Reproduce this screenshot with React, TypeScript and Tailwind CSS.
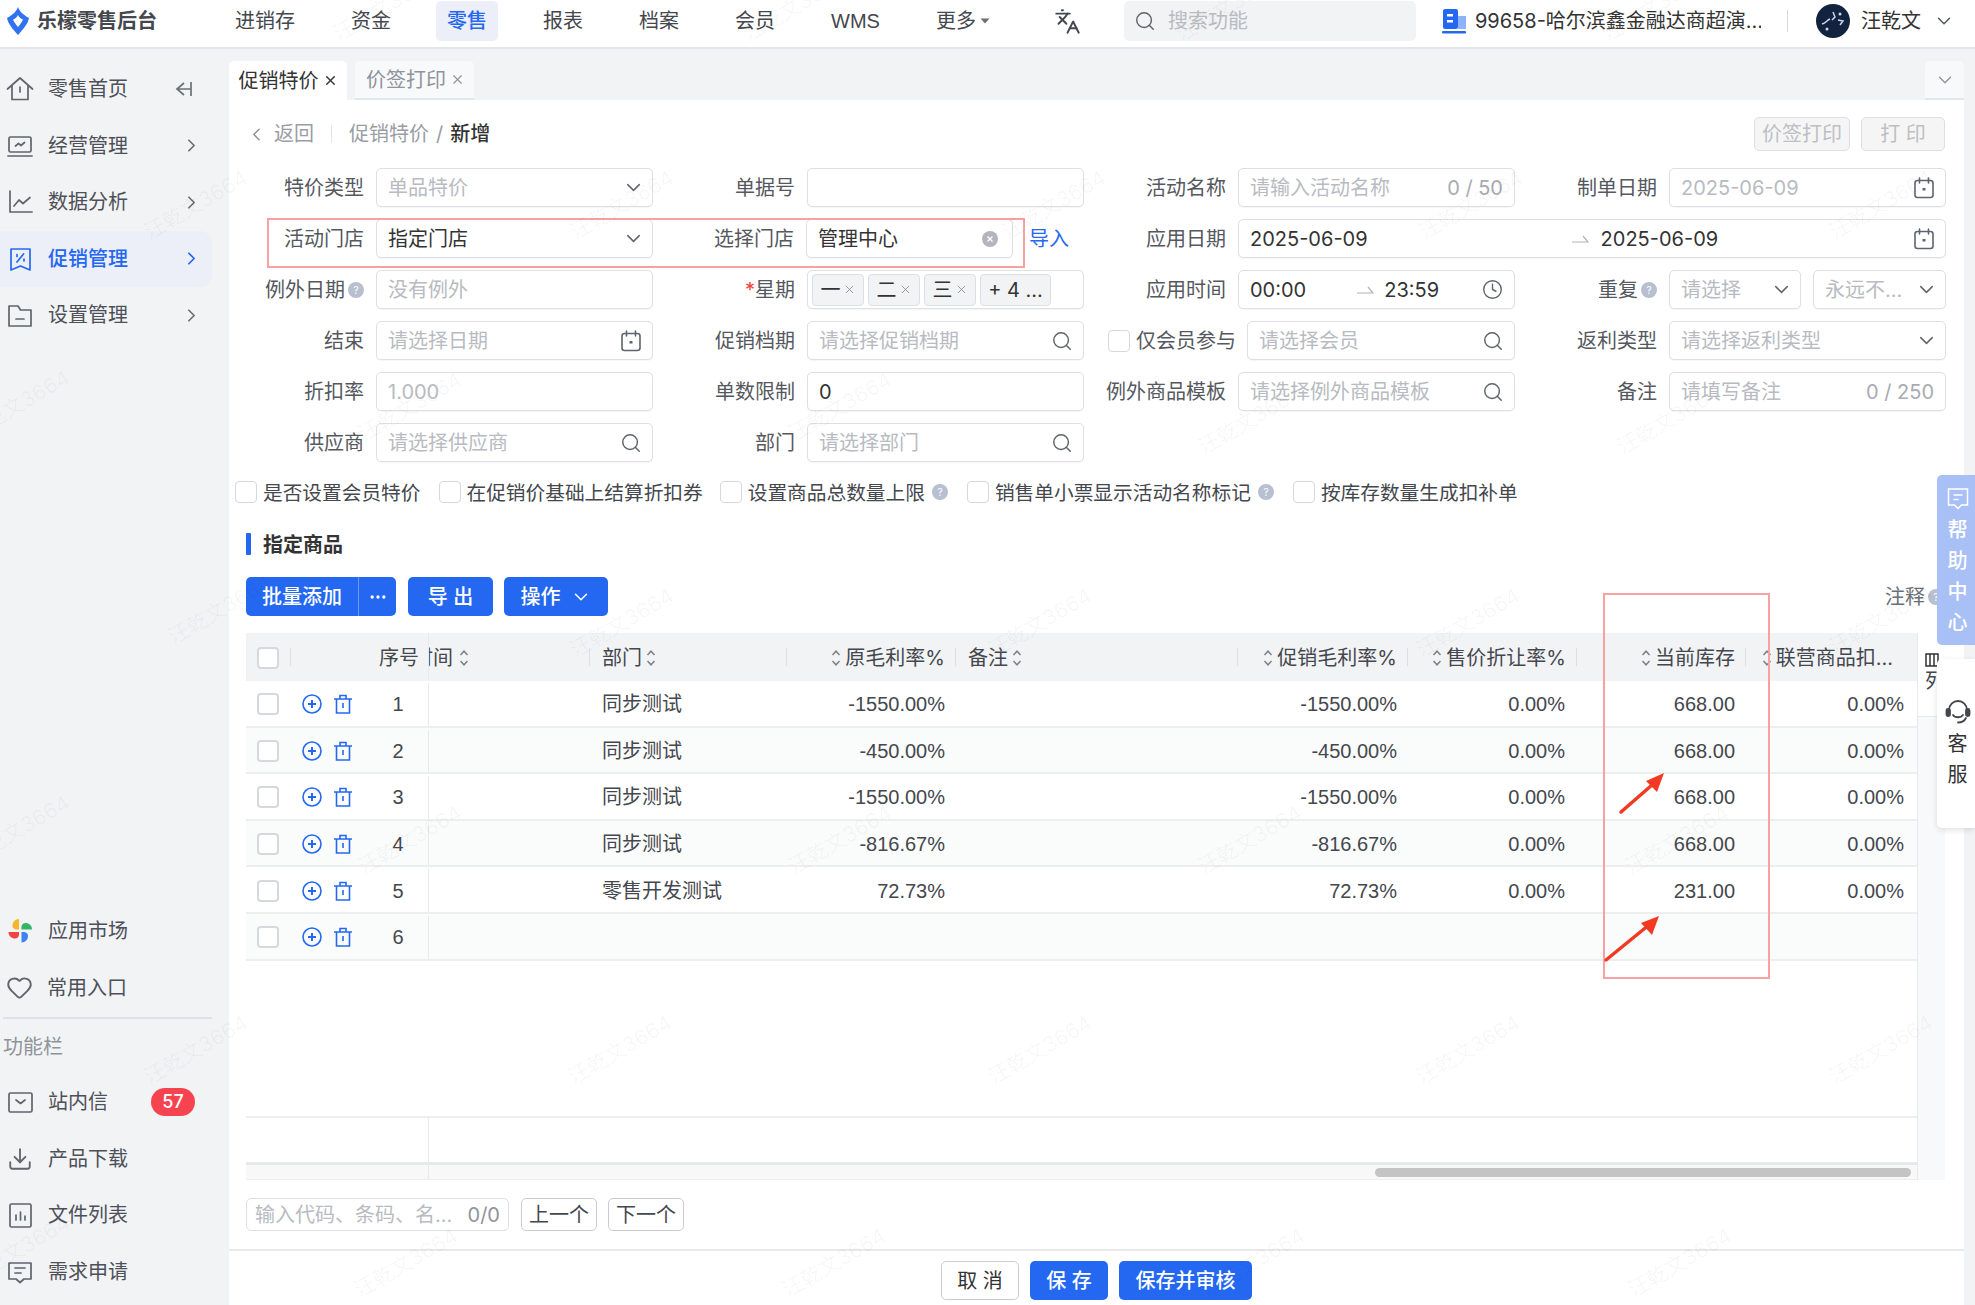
import React from "react";
import { ChevronDown, ChevronRight, ChevronLeft, Search, Clock, Languages, X, MoreHorizontal, Download, Heart } from "lucide-react";

const BLUE = "#2468f2";

function Sort() {
  return (
    <svg width="10" height="18" viewBox="0 0 10 18" fill="none" stroke="#7c8188" strokeWidth="1.500" className="shrink-0">
      <path d="M1.500 6 5 2.200 8.500 6M1.500 12 5 15.800 8.500 12" />
    </svg>
  );
}
function Help({ size = 16 }: { size?: number }) {
  return (
    <svg width={size} height={size} viewBox="0 0 16 16" className="shrink-0">
      <circle cx="8" cy="8" r="8" fill="#b7bfd0" />
      <text x="8" y="11.500" textAnchor="middle" fontSize="10" fill="#fff" fontFamily="Inter">?</text>
    </svg>
  );
}
function Box({ className = "", children }: { className?: string; children?: React.ReactNode }) {
  return <div className={"flex items-center h-[39px] rounded-[5px] border border-[#dcdfe4] bg-white px-[11px] shadow-[0_1px_1px_rgba(0,0,0,0.04)] " + className}>{children}</div>;
}
function Ph({ children }: { children: React.ReactNode }) {
  return <span className="text-[#b8bbc1] whitespace-nowrap">{children}</span>;
}
function Field({ label, help, req, children, className = "" }: { label: string; help?: boolean; req?: boolean; children: React.ReactNode; className?: string }) {
  return (
    <div className={"flex items-center justify-end " + className}>
      <div className="flex items-center text-[#55585e] whitespace-nowrap mr-3">
        {req && <span className="text-[#f04040]">*</span>}
        {label}
        {help && <span className="ml-[3px]"><Help /></span>}
      </div>
      {children}
    </div>
  );
}
const input = "w-[277px]";
const Cv = () => <ChevronDown size={23} strokeWidth={1.500} className="ml-auto -mr-[4px] text-[#5f646d] shrink-0" />;
const Sr = () => <Search size={22} strokeWidth={1.600} className="ml-auto -mr-[1px] text-[#5f646d] shrink-0" />;
function Cal() {
  return (
    <svg width="20" height="22" viewBox="0 0 20 22" fill="none" stroke="#5f646d" strokeWidth="1.600" className="ml-auto shrink-0">
      <rect x="1" y="3.500" width="18" height="17" rx="2.500" />
      <path d="M5.500 1v5M14.500 1v5" strokeLinecap="round" />
      <rect x="8.500" y="11" width="3" height="2.500" fill="#5f646d" stroke="none" />
    </svg>
  );
}
function HalfArrow({ className = "" }: { className?: string }) {
  return (
    <svg width="17" height="9" viewBox="0 0 17 9" fill="none" stroke="#b0b3b9" strokeWidth="1.200" className={"shrink-0 " + className}>
      <path d="M0 8h16L11 2" />
    </svg>
  );
}

function Tag({ t }: { t: string }) {
  return (
    <span className="flex items-center h-[32px] w-[52px] justify-center rounded-[4px] border border-[#dcdfe4] bg-[#f2f3f5] text-[#333] mr-[4px] whitespace-nowrap">
      {t}
      <X size={13} strokeWidth={1.400} className="ml-[2px] text-[#7c8188]" />
    </span>
  );
}
function Check({ className = "" }: { className?: string }) {
  return <span className={"inline-block w-[22px] h-[22px] rounded-[4px] border border-[#d5d8dd] bg-white shrink-0 " + className} />;
}

function NavIcon({ name, color }: { name: string; color: string }) {
  const p = { fill: "none", stroke: color, strokeWidth: 1.700, strokeLinecap: "round" as const, strokeLinejoin: "round" as const };
  return (
    <svg width="28" height="28" viewBox="0 0 28 28" className="shrink-0">
      {name === "home" && <g {...p}><path d="M1.500 14 14 3l12.500 11M6 11v13.500h16V11" /><path d="M14 12v5" /></g>}
      {name === "biz" && <g {...p}><rect x="3" y="5" width="22" height="15" rx="1.500" /><path d="M2 24h24M9.500 14l3-2.500 2.500 2 3.500-3" /></g>}
      {name === "chart" && <g {...p}><path d="M4 3v21h22M8 18l5-6 4 3.500 7-6" /></g>}
      {name === "promo" && <g {...p}><path d="M5 4h19v21l-9.500-4-9.500 4z" /><path d="M17.500 9 11 17" /><path d="M11 9.500v2M18 14v2" /></g>}
      {name === "folder" && <g {...p}><path d="M3 5h9l2.500 4H25v16H3z" /><path d="M10 18h8" /></g>}
      {name === "mail" && <g {...p}><rect x="3" y="5" width="23" height="19" rx="1.500" /><path d="m10 12 4.500 3.500L19 12" /></g>}
      {name === "file" && <g {...p}><rect x="4" y="3" width="21" height="23" rx="1.500" /><path d="M10 19v-5M14.500 19v-8M19 19v-4" /></g>}
      {name === "req" && <g {...p}><path d="M3 5h22v16h-7l-4 3.500-4-3.500H3z" /><path d="M9 10h10M9 15h6" /></g>}
    </svg>
  );
}
function Item({ icon, text, active, right }: { icon: React.ReactNode; text: string; active?: boolean; right?: React.ReactNode }) {
  return (
    <div className={"flex items-center h-[56.500px] w-[212px] pl-[6px] rounded-r-[12px] " + (active ? "bg-[#eceef8] text-[#2468f2] font-medium" : "text-[#4d5058]")}>
      {icon}
      <span className="ml-[14px] whitespace-nowrap">{text}</span>
      {right}
    </div>
  );
}
const Arr = ({ active }: { active?: boolean }) => <ChevronRight size={21} strokeWidth={2} className={"ml-auto mr-[10px] " + (active ? "text-[#2468f2]" : "text-[#6b7078]")} />;

const cols = "grid grid-cols-[183px_161px_197px_169px_282px_170px_169px_169px_171px]";
const rows: [string, string, string, string, string, string][] = [
  ["1", "同步测试", "-1550.00%", "-1550.00%", "668.00", "0.00%"],
  ["2", "同步测试", "-450.00%", "-450.00%", "668.00", "0.00%"],
  ["3", "同步测试", "-1550.00%", "-1550.00%", "668.00", "0.00%"],
  ["4", "同步测试", "-816.67%", "-816.67%", "668.00", "0.00%"],
  ["5", "零售开发测试", "72.73%", "72.73%", "231.00", "0.00%"],
  ["6", "", "", "", "", ""],
];

const marks: [number, number][] = [
  [385, 7], [795, 7], [1228, 7], [1654, 7],
  [196, 205], [622, 205], [1054, 205], [1471, 205], [1881, 205],
  [18, 405], [410, 407], [840, 407], [1250, 420], [1669, 420],
  [220, 610], [622, 623], [1040, 623], [1468, 623], [1881, 620],
  [18, 830], [410, 840], [840, 840], [1250, 840], [1677, 840],
  [196, 1050], [620, 1050], [1040, 1050], [1468, 1050], [1881, 1050],
  [18, 1250], [406, 1263], [834, 1263], [1253, 1263], [1680, 1263],
];

function HeadCell({ children, right, last }: { children: React.ReactNode; right?: boolean; last?: boolean }) {
  return (
    <div className={"relative flex items-center whitespace-nowrap h-full gap-[4px] pt-[1px] " + (right ? "justify-end pr-[11px]" : "pl-3")}>
      {children}
      {!last && <span className="absolute right-0 top-[15px] h-[18px] w-px bg-[#dcdfe4]" />}
    </div>
  );
}

const CkText = ({ children }: { children: React.ReactNode }) => <span className="ml-[6px] pt-[2px]">{children}</span>;

export default function App() {
  return (
    <div className="relative w-[1975px] h-[1305px] overflow-hidden bg-[#f2f3f5] text-[20px] leading-[26px] text-[#333]" style={{ fontFamily: 'Inter, "Noto Sans CJK SC", sans-serif' }}>
      {/* header */}
      <header className="flex items-center h-[49px] pb-[5px] bg-white border-b-2 border-[#e3e5e8]">
        <svg width="22" height="28" viewBox="0 0 22 28" className="ml-[7px] shrink-0">
          <path d="M11 0c1.500 4 4.500 7.500 11 11-1 5.500-5.500 11-11 17C5.500 22 1 16.500 0 11 6.500 7.500 9.500 4 11 0z" fill="#2f72f2" />
          <path d="M11 8c1 2 2.500 3.500 5 4.500-1 2.500-3 5-5 7.500-2-2.500-4-5-5-7.500 2.500-1 4-2.500 5-4.500z" fill="#fff" />
        </svg>
        <span className="ml-[8px] w-[187px] font-bold text-[#44474d] whitespace-nowrap">乐檬零售后台</span>
        <nav className="flex items-center gap-[34px]">
          {["进销存", "资金", "零售", "报表", "档案", "会员"].map((t) => (
            <span key={t} className={"flex items-center h-[40px] px-[11px] rounded-[5px] whitespace-nowrap " + (t === "零售" ? "bg-[#eceef8] text-[#2468f2] font-medium" : "text-[#44474d]")}>{t}</span>
          ))}
          <span className="flex items-center h-[40px] px-[11px] text-[#44474d] whitespace-nowrap font-['Liberation_Sans']">WMS</span>
          <span className="flex items-center h-[40px] px-[11px] text-[#44474d] whitespace-nowrap">
            更多
            <svg width="12" height="8" viewBox="0 0 12 8" className="ml-[3px]"><path d="M1.500 1.500h9L6 6.500z" fill="#6b7078" /></svg>
          </span>
        </nav>
        <Languages size={27} strokeWidth={1.700} className="ml-[52px] text-[#44474d] shrink-0" />
        <div className="flex items-center ml-[43px] w-[292px] h-[40px] rounded-[5px] bg-[#f2f3f5] pl-[10px]">
          <Search size={22} strokeWidth={1.600} className="text-[#5f646d]" />
          <span className="ml-[12px] text-[#b8bbc1]">搜索功能</span>
        </div>
        <svg width="26" height="26" viewBox="0 0 26 26" className="ml-[25px] shrink-0">
          <rect x="2" y="1" width="15" height="20" rx="2" fill={BLUE} />
          <rect x="17" y="8" width="8" height="13" fill="#8fb2f8" />
          <rect x="6" y="6" width="6" height="2.500" fill="#fff" />
          <rect x="6" y="12" width="6" height="2.500" fill="#fff" />
          <rect x="1" y="23" width="24" height="2.500" rx="1" fill={BLUE} />
        </svg>
        <span className="ml-[8px] w-[286px] text-[#333] whitespace-nowrap overflow-hidden">99658-哈尔滨鑫金融达商超演...</span>
        <span className="ml-[26px] w-px h-[22px] bg-[#d5d8dd]" />
        <span className="relative ml-[28px] w-[34px] h-[34px] rounded-full bg-[#12233f] shrink-0 overflow-hidden">
          <svg width="34" height="34" viewBox="0 0 34 34">
            <path d="M6 20c4-1 5-4 8-5M17 8l2 5-3 3M22 16l5 1-3 4" stroke="#cfd8e6" strokeWidth="1.500" fill="none" />
            <circle cx="24" cy="10" r="1.500" fill="#cfd8e6" />
            <circle cx="11" cy="25" r="1.500" fill="#cfd8e6" />
          </svg>
        </span>
        <span className="ml-[11px] text-[#333] whitespace-nowrap">汪乾文</span>
        <ChevronDown size={22} strokeWidth={1.600} className="ml-[12px] text-[#55585e]" />
      </header>

      <div className="flex h-[1256px]">
        {/* sidebar */}
        <aside className="w-[229px] shrink-0 flex flex-col pt-[12px] pb-[5px]">
          <Item icon={<NavIcon name="home" color="#5f646d" />} text="零售首页" right={
            <svg width="20" height="18" viewBox="0 0 20 18" fill="none" stroke="#6b7078" strokeWidth="1.700" className="ml-auto mr-[18px]"><path d="M10 3 3 9l7 6M3 9h14M17 2v14" /></svg>
          } />
          <Item icon={<NavIcon name="biz" color="#5f646d" />} text="经营管理" right={<Arr />} />
          <Item icon={<NavIcon name="chart" color="#5f646d" />} text="数据分析" right={<Arr />} />
          <Item active icon={<NavIcon name="promo" color={BLUE} />} text="促销管理" right={<Arr active />} />
          <Item icon={<NavIcon name="folder" color="#5f646d" />} text="设置管理" right={<Arr />} />
          <div className="flex-1" />
          <Item icon={
            <svg width="28" height="28" viewBox="0 0 28 28" className="shrink-0">
              <path d="M13 12.500V2C9 2 6.500 5 6.500 8.500S9.500 13 13 12.500z" fill="#f7b52c" />
              <path d="M15.500 12.500H26c0-4-3-6.500-6.500-6.500s-4.500 3-4 6.500z" fill="#34b56a" />
              <path d="M15.500 15v10.500c4 0 6.500-3 6.500-6.500S19 14.500 15.500 15z" fill="#3b82f6" />
              <path d="M13 15H2.500c0 4 3 6.500 6.500 6.500s4.500-3 4-6.500z" fill="#ef4444" />
            </svg>
          } text="应用市场" />
          <Item icon={<Heart size={27} strokeWidth={1.700} className="text-[#5f646d] shrink-0" />} text="常用入口" />
          <div className="mx-[3px] mt-[1px] w-[209px] border-t-2 border-[#dfe1e5]" />
          <div className="flex items-center h-[55px] pl-[3px] text-[#8f939a]">功能栏</div>
          <Item icon={<NavIcon name="mail" color="#5f646d" />} text="站内信" right={
            <span className="ml-auto mr-[17px] flex items-center justify-center w-[44px] h-[28px] rounded-full bg-[#f5444f] text-white text-[18px] font-medium">57</span>
          } />
          <Item icon={<Download size={26} strokeWidth={1.700} className="text-[#5f646d] shrink-0 ml-[1px] mr-[1px]" />} text="产品下载" />
          <Item icon={<NavIcon name="file" color="#5f646d" />} text="文件列表" />
          <Item icon={<NavIcon name="req" color="#5f646d" />} text="需求申请" />
        </aside>

        {/* main */}
        <main className="flex-1 flex flex-col min-w-0">
          <div className="flex items-end h-[51px] shrink-0 pr-[11px]">
            <div className="flex items-center h-[39px] w-[118px] justify-center rounded-t-[5px] bg-white text-[#333] whitespace-nowrap">
              促销特价<X size={15} strokeWidth={2.200} className="ml-[4px]" />
            </div>
            <div className="flex items-center h-[39px] w-[119px] justify-center ml-[8px] pl-[2px] rounded-t-[5px] bg-[#f8f9fa] border-b-2 border-[#e3e5e8] text-[#8f939a] whitespace-nowrap">
              价签打印<X size={15} strokeWidth={1.700} className="ml-[4px]" />
            </div>
            <div className="ml-auto flex items-center justify-center h-[39px] w-[39px] rounded-t-[5px] bg-[#f8f9fa] border-b-2 border-[#e3e5e8]">
              <ChevronDown size={22} strokeWidth={1.500} className="text-[#8f939a]" />
            </div>
          </div>

          <div className="flex-1 flex flex-col mr-[11px] bg-white min-h-0">
            {/* breadcrumb */}
            <div className="flex items-center h-[68px] shrink-0 pl-[17px] pr-[19px]">
              <ChevronLeft size={21} strokeWidth={1.700} className="text-[#8f939a]" />
              <span className="ml-[7px] text-[#9a9da3]">返回</span>
              <span className="ml-[17px] h-[18px] w-px bg-[#e3e5e8]" />
              <span className="ml-[17px] text-[#9a9da3]">促销特价</span>
              <span className="ml-[7px] text-[#9a9da3]">/</span>
              <span className="ml-[7px] text-[#333] font-medium">新增</span>
              <span className="ml-auto flex items-center justify-center w-[96px] h-[34px] rounded-[5px] border border-[#dcdfe4] bg-[#f5f5f5] text-[#bcbfc4]">价签打印</span>
              <span className="ml-[11px] flex items-center justify-center w-[84px] h-[34px] rounded-[5px] border border-[#dcdfe4] bg-[#f5f5f5] text-[#bcbfc4]">打 印</span>
            </div>

            {/* form */}
            <div className="grid grid-cols-[424px_431px_431px_431px] auto-rows-[39px] gap-y-[12px] shrink-0">
              <Field label="特价类型"><Box className={input}><Ph>单品特价</Ph><Cv /></Box></Field>
              <Field label="单据号"><Box className={input} /></Field>
              <Field label="活动名称"><Box className={input}><Ph>请输入活动名称</Ph><span className="ml-auto text-[#a8abb1]">0 / 50</span></Box></Field>
              <Field label="制单日期"><Box className={input}><span className="text-[#b8bbc1]">2025-06-09</span><Cal /></Box></Field>

              <Field label="活动门店"><Box className={input}><span>指定门店</span><Cv /></Box></Field>
              <div className="flex items-center">
                <div className="flex-1 flex items-center justify-end text-[#55585e] whitespace-nowrap mr-3">选择门店</div>
                <Box className="w-[207px]">
                  <span>管理中心</span>
                  <svg width="18" height="18" viewBox="0 0 18 18" className="ml-auto mr-[2px]">
                    <circle cx="9" cy="9" r="8" fill="#b2b5bb" />
                    <path d="M6.500 6.500l5 5M11.500 6.500l-5 5" stroke="#fff" strokeWidth="1.400" />
                  </svg>
                </Box>
                <span className="ml-[16px] w-[55px] text-[#2468f2]">导入</span>
              </div>
              <Field label="应用日期" className="col-span-2">
                <Box className="w-[708px]">
                  <span>2025-06-09</span>
                  <HalfArrow className="ml-[204px]" />
                  <span className="ml-[12px]">2025-06-09</span>
                  <Cal />
                </Box>
              </Field>

              <Field label="例外日期" help><Box className={input}><Ph>没有例外</Ph></Box></Field>
              <Field label="星期" req>
                <Box className={input + " !px-[4px]"}>
                  <Tag t="一" /><Tag t="二" /><Tag t="三" />
                  <span className="flex items-center justify-center h-[32px] w-[71px] rounded-[4px] border border-[#dcdfe4] bg-[#f2f3f5] whitespace-nowrap">+ 4 ...</span>
                </Box>
              </Field>
              <Field label="应用时间">
                <Box className={input}>
                  <span>00:00</span>
                  <HalfArrow className="ml-[51px]" />
                  <span className="ml-[10px]">23:59</span>
                  <Clock size={21} strokeWidth={1.600} className="ml-auto text-[#5f646d]" />
                </Box>
              </Field>
              <Field label="重复" help>
                <Box className="w-[132px]"><Ph>请选择</Ph><Cv /></Box>
                <Box className="w-[133px] ml-[12px]"><Ph>永远不...</Ph><Cv /></Box>
              </Field>

              <Field label="结束"><Box className={input}><Ph>请选择日期</Ph><Cal /></Box></Field>
              <Field label="促销档期"><Box className={input}><Ph>请选择促销档期</Ph><Sr /></Box></Field>
              <div className="flex items-center justify-end">
                <Check className="mr-[6px]" />
                <span className="text-[#55585e] whitespace-nowrap mr-[11px]">仅会员参与</span>
                <Box className="w-[268px]"><Ph>请选择会员</Ph><Sr /></Box>
              </div>
              <Field label="返利类型"><Box className={input}><Ph>请选择返利类型</Ph><Cv /></Box></Field>

              <Field label="折扣率"><Box className={input}><span className="text-[#b8bbc1]">1.000</span></Box></Field>
              <Field label="单数限制"><Box className={input}>0</Box></Field>
              <Field label="例外商品模板"><Box className={input}><Ph>请选择例外商品模板</Ph><Sr /></Box></Field>
              <Field label="备注"><Box className={input}><Ph>请填写备注</Ph><span className="ml-auto text-[#a8abb1]">0 / 250</span></Box></Field>

              <Field label="供应商"><Box className={input}><Ph>请选择供应商</Ph><Sr /></Box></Field>
              <Field label="部门"><Box className={input}><Ph>请选择部门</Ph><Sr /></Box></Field>
            </div>

            {/* checks */}
            <div className="flex items-center h-[22px] mt-[19px] pl-[6px] shrink-0 text-[19.700px] text-[#44474d] whitespace-nowrap">
              <Check /><CkText>是否设置会员特价</CkText>
              <Check className="ml-[18px]" /><CkText>在促销价基础上结算折扣券</CkText>
              <Check className="ml-[17px]" /><CkText>设置商品总数量上限</CkText><span className="ml-[7px]"><Help /></span>
              <Check className="ml-[19px]" /><CkText>销售单小票显示活动名称标记</CkText><span className="ml-[7px]"><Help /></span>
              <Check className="ml-[19px]" /><CkText>按库存数量生成扣补单</CkText>
            </div>

            {/* section */}
            <div className="flex items-center h-[22px] mt-[30px] ml-[17px] shrink-0">
              <span className="w-[5px] h-[22px] rounded-[1px] bg-[#2468f2]" />
              <span className="ml-[12px] pt-[2px] font-semibold text-[#333]">指定商品</span>
            </div>

            {/* toolbar */}
            <div className="flex items-center h-[39px] mt-[22px] ml-[17px] mr-[20px] shrink-0 text-white">
              <span className="flex items-center justify-center w-[112px] h-full pt-[1px] rounded-l-[5px] bg-[#2468f2] font-medium">批量添加</span>
              <span className="flex items-center justify-center w-[38px] h-full rounded-r-[5px] bg-[#2468f2] border-l border-[#6a98f6]"><MoreHorizontal size={20} /></span>
              <span className="flex items-center justify-center ml-[12px] w-[85px] h-full pt-[1px] rounded-[5px] bg-[#2468f2] font-medium">导 出</span>
              <span className="flex items-center justify-center ml-[11px] w-[104px] h-full pt-[1px] rounded-[5px] bg-[#2468f2] font-medium">操作<ChevronDown size={22} strokeWidth={1.700} className="ml-[9px]" /></span>
              <span className="ml-auto flex items-center text-[#6b7078]">注释<span className="ml-[3px]"><Help /></span></span>
            </div>

            {/* table */}
            <div className="flex mt-[17px] ml-[17px] h-[547px] shrink-0">
              <div className="w-[1671px] flex flex-col text-[#44474d]">
                <div className={cols + " h-[48px] bg-[#f2f3f5] shrink-0"}>
                  <div className="relative flex items-center h-full border-r border-[#e8e9eb] pt-[1px]">
                    <Check className="ml-[11px] border-2" />
                    <span className="absolute left-[44px] top-[15px] h-[18px] w-px bg-[#dcdfe4]" />
                    <span className="absolute left-[133px]">序号</span>
                  </div>
                  <HeadCell>
                    <span className="w-[24px] overflow-hidden flex justify-end -ml-[12px]"><span className="shrink-0">时间</span></span>
                    <span className="ml-[2px]"><Sort /></span>
                  </HeadCell>
                  <HeadCell>部门<Sort /></HeadCell>
                  <HeadCell right><Sort />原毛利率%</HeadCell>
                  <HeadCell>备注<Sort /></HeadCell>
                  <HeadCell right><Sort />促销毛利率%</HeadCell>
                  <HeadCell right><Sort />售价折让率%</HeadCell>
                  <HeadCell right><Sort />当前库存</HeadCell>
                  <HeadCell right last><Sort /><span className="mr-[13px]">联营商品扣...</span></HeadCell>
                </div>
                {rows.map((r, i) => (
                  <div key={r[0]} className={cols + " h-[46.600px] pt-[2px] shrink-0 border-b-2 border-[#eceef0] " + (i % 2 ? "bg-[#fafbfb]" : "bg-white")} style={{ fontFamily: '"Liberation Sans", "Noto Sans CJK SC", sans-serif' }}>
                    <div className="relative flex items-center border-r border-[#e8e9eb]">
                      <Check className="ml-[11px] border-2" />
                      <svg width="20" height="20" viewBox="0 0 20 20" fill="none" stroke={BLUE} strokeWidth="1.600" className="ml-[23px] shrink-0">
                        <circle cx="10" cy="10" r="9" /><path d="M10 6v8M6 10h8" strokeWidth="2" />
                      </svg>
                      <svg width="20" height="20" viewBox="0 0 20 20" fill="none" stroke={BLUE} strokeWidth="1.600" className="ml-[11px] shrink-0">
                        <path d="M1 5h18M3.500 5v14h13V5M7 5V1.500h6V5M10 9v5" />
                      </svg>
                      <span className="absolute left-[133px] w-[38px] text-center">{r[0]}</span>
                    </div>
                    <div />
                    <div className="flex items-center pl-3 whitespace-nowrap">{r[1]}</div>
                    <div className="flex items-center justify-end pr-[11px]">{r[2]}</div>
                    <div />
                    <div className="flex items-center justify-end pr-[11px]">{r[3]}</div>
                    <div className="flex items-center justify-end pr-[12px]">{r[5] && "0.00%"}</div>
                    <div className="flex items-center justify-end pr-[11px]">{r[4]}</div>
                    <div className="flex items-center justify-end pr-[13px]">{r[5]}</div>
                  </div>
                ))}
                <div className="flex-1 border-b-2 border-[#eceef0]" />
                <div className="h-[47px] shrink-0 border-b-[3px] border-[#e8e9eb] flex">
                  <div className="w-[183px] border-r border-[#e8e9eb]" />
                </div>
                <div className="relative h-[15px] shrink-0 bg-[#f8f8f8] border-b border-[#eceef0] flex">
                  <div className="w-[183px] border-r border-[#e8e9eb]" />
                  <span className="absolute left-[1129px] top-[3px] w-[536px] h-[9px] rounded-full bg-[#c4c4c4]" />
                </div>
              </div>
              <div className="relative w-[28px] bg-[#f8f9fb] border-l border-[#e8e9eb]">
                <div className="h-[84px] bg-white border-b border-[#e8e9eb] pt-[20px] pl-[7px] text-[#44474d]">
                  <svg width="14" height="14" viewBox="0 0 14 14" fill="none" stroke="#333" strokeWidth="1.500"><path d="M1 1h12v12H1zM5 1v12M9 1v12" /></svg>
                  <div className="mt-[1px]">列</div>
                </div>
              </div>
            </div>

            {/* find bar */}
            <div className="flex items-center h-[33px] mt-[18px] ml-[17px] shrink-0">
              <div className="flex items-center w-[263px] h-full rounded-[5px] border border-[#dcdfe4] px-[8px]">
                <span className="text-[#b8bbc1] whitespace-nowrap">输入代码、条码、名...</span>
                <span className="ml-auto text-[#8f939a]">0/0</span>
              </div>
              <span className="ml-[12px] flex items-center justify-center w-[76px] h-full rounded-[5px] border border-[#c9ccd2] text-[#44474d]">上一个</span>
              <span className="ml-[11px] flex items-center justify-center w-[76px] h-full rounded-[5px] border border-[#c9ccd2] text-[#44474d]">下一个</span>
            </div>

            {/* footer */}
            <div className="mt-auto h-[56px] shrink-0 border-t-2 border-[#e8e9eb] flex justify-center gap-[11px] pt-[10px]">
              <span className="flex items-center justify-center w-[78px] h-[39px] rounded-[5px] border border-[#c9ccd2] bg-white text-[#333]">取 消</span>
              <span className="flex items-center justify-center w-[78px] h-[39px] rounded-[5px] bg-[#2468f2] text-white font-medium">保 存</span>
              <span className="flex items-center justify-center w-[133px] h-[39px] rounded-[5px] bg-[#2468f2] text-white font-medium">保存并审核</span>
            </div>
          </div>
        </main>
      </div>

      {/* floating help panels */}
      <div className="absolute left-[1937px] top-[475px] w-[38px] h-[170px] rounded-l-[5px] bg-[#a9c0f7] flex flex-col items-center pt-[12px] pl-[3px] text-white font-medium leading-[26px]">
        <svg width="22" height="24" viewBox="0 0 22 24" fill="none" stroke="#fff" strokeWidth="1.500"><path d="M1.500 2h19v16h-6l-3.500 3.500L7.500 18h-6z" /><path d="M6.500 8h9M6.500 12.500h5" /></svg>
        <span className="mt-[6px]">帮</span>
        <span className="mt-[5px]">助</span>
        <span className="mt-[5px]">中</span>
        <span className="mt-[5px]">心</span>
      </div>
      <div className="absolute left-[1937px] top-[659px] w-[38px] h-[169px] rounded-l-[5px] bg-white shadow-[0_2px_6px_rgba(0,0,0,0.12)] flex flex-col items-center pt-[40px] pl-[3px] text-[#333]">
        <svg width="26" height="26" viewBox="0 0 26 26" fill="none" stroke="#44474d" strokeWidth="1.800" strokeLinecap="round"><path d="M4 13V11a9 9 0 0 1 18 0v2" /><rect x="1.500" y="10" width="3.500" height="7" rx="1.500" fill="#44474d" /><rect x="21" y="10" width="3.500" height="7" rx="1.500" fill="#44474d" /><path d="M8 16c2 3 8 3 10 0M13 23.500c4 0 6.500-1.500 8-4.500" /></svg>
        <span className="mt-[6px]">客</span>
        <span className="mt-[5px]">服</span>
      </div>

      {/* annotations */}
      <div className="absolute left-[267px] top-[218px] w-[758px] h-[50px] border-2 border-[#f9a0a0] pointer-events-none" />
      <div className="absolute left-[1603px] top-[593px] w-[167px] h-[386px] border-2 border-[#f9a0a0] pointer-events-none" />
      <svg width="100" height="210" viewBox="0 0 100 210" className="absolute left-[1600px] top-[765px] pointer-events-none">
        <path d="M21 47 60 13" stroke="#f23a22" strokeWidth="3.500" strokeLinecap="round" />
        <path d="M64 8 46 16l11 11z" fill="#f23a22" />
        <path d="M6 195 55 155" stroke="#f23a22" strokeWidth="3.500" strokeLinecap="round" />
        <path d="M59 151 41 158l11 12z" fill="#f23a22" />
      </svg>

      {/* watermark */}
      {marks.map(([x, y]) => (
        <span key={x + "-" + y} className="absolute pointer-events-none -rotate-[30deg] whitespace-nowrap text-[21px] text-[rgba(0,0,0,0.04)] -translate-x-1/2 -translate-y-1/2" style={{ left: x, top: y }}>汪乾文3664</span>
      ))}
    </div>
  );
}
